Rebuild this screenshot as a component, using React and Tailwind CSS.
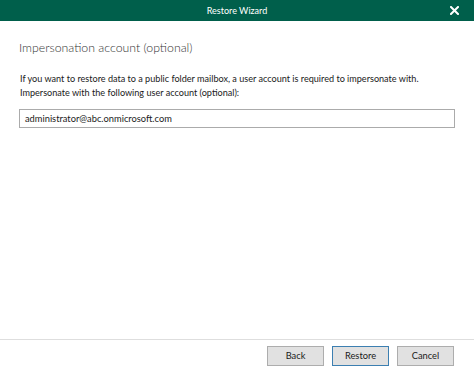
export default function App() {
  const font = { fontFamily: 'Lato, "Noto Sans", sans-serif' };
  return (
    <div className="w-[474px] h-[372px] bg-white flex flex-col overflow-hidden text-[#1a1a1a]" style={font}>
      <div className="h-[21px] bg-[#005f4b] flex items-center justify-center relative shrink-0">
        <span className="text-white text-[9px] leading-none">Restore Wizard</span>
        <svg className="absolute right-[15px] top-[6px]" width="9" height="9" viewBox="0 0 9 9">
          <path d="M1 1 L8 8 M8 1 L1 8" stroke="white" strokeWidth="2" strokeLinecap="square" />
        </svg>
      </div>
      <div className="flex-1 flex flex-col px-[19px]">
        <div className="mt-[20px] text-[12.3px] font-light leading-[14px] text-[#333] whitespace-nowrap">Impersonation account (optional)</div>
        <div className="mt-[17px] text-[9.1px] leading-[14px] pl-[1px] whitespace-nowrap">If you want to restore data to a public folder mailbox, a user account is required to impersonate with.</div>
        <div className="mt-[0px] text-[9.1px] leading-[14px] pl-[1px] whitespace-nowrap">Impersonate with the following user account (optional):</div>
        <div className="mt-[9px] h-[19px] border border-[#ababab] flex items-center px-[5px] text-[9.3px]">administrator@abc.onmicrosoft.com</div>
      </div>
      <div className="h-px bg-[#dedede] shrink-0" />
      <div className="h-[32px] flex items-start justify-end gap-[8px] pr-[20px] pt-[6px] shrink-0">
        <button className="w-[57px] h-[20px] bg-[#e1e1e1] border border-[#adadad] text-[9.3px] leading-none">Back</button>
        <button className="w-[57px] h-[20px] bg-[#e1e1e1] border border-[#3c7fb1] text-[9.3px] leading-none">Restore</button>
        <button className="w-[57px] h-[20px] bg-[#e1e1e1] border border-[#adadad] text-[9.3px] leading-none">Cancel</button>
      </div>
    </div>
  );
}
